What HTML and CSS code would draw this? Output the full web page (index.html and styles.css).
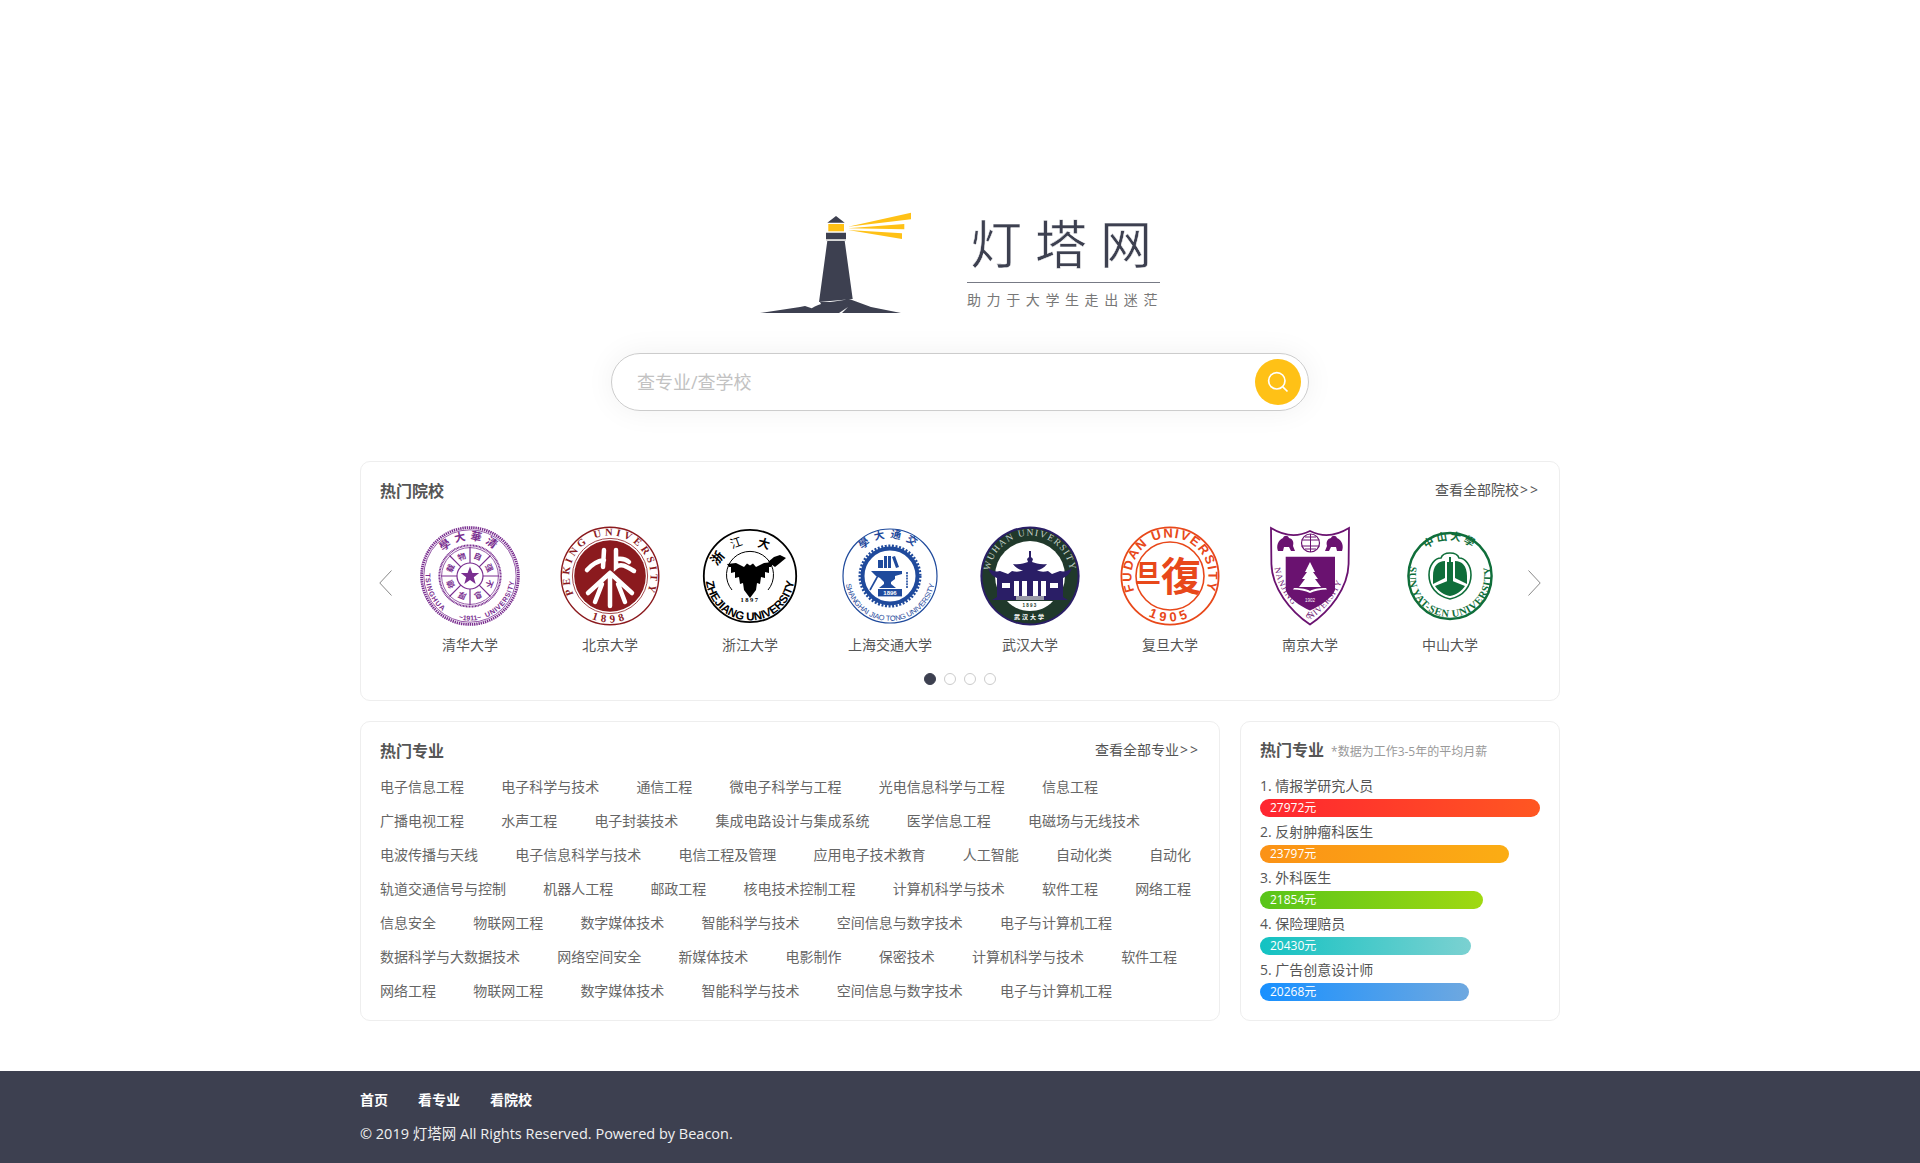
FILE: index.html
```html
<!DOCTYPE html>
<html lang="zh-CN">
<head>
  <meta charset="UTF-8" />
  <meta name="viewport" content="width=device-width, initial-scale=1.0"/>
  <title>灯塔网</title>
  <link rel="stylesheet" href="styles.css">
</head>
<body>
  <div class="logo">
    <svg class="logo-mark" viewBox="0 0 152 101">
      <path class="fill-yellow" d="M88 14.7 151 .7V7.3ZM88 16.3 144.3 12V17.3ZM88 18 142 21.3V27Z"/>
      <path class="fill-dark" d="M76 4 84.7 10.7H67.3ZM66 20.7H86V27H66ZM67.3 29H84.7L92.7 87 59 90Z"/>
      <rect class="fill-yellow" x="68.3" y="12" width="15.7" height="7.3"/>
      <rect class="fill-gray" x="66" y="27" width="20" height="1.7"/>
      <path class="fill-dark" d="M0 101 40 95 45 94 51.7 96.3C60 91 70 90 84 88L87 86.5 92 88 111 95 141 101H82L88 95 79 101Z"/>
      <path class="fill-dark" d="M60 90H92V92L80 90 62 94Z"/>
    </svg>
    <div class="brand">
      <div class="brand-name">灯塔网</div>
      <div class="brand-sub">助力于大学生走出迷茫</div>
    </div>
  </div>

  <form class="search">
    <input type="text" placeholder="查专业/查学校">
    <button type="button" class="search-btn" aria-label="搜索">
      <svg viewBox="0 0 24 24" width="24" height="24"><circle cx="10.8" cy="10.8" r="8.2"/><path d="M16.8 16.8 21.5 21.5"/></svg>
    </button>
  </form>

  <section class="card schools">
    <div class="card-head">
      <h2>热门院校</h2>
      <a class="more">查看全部院校<span>&gt;&gt;</span></a>
    </div>
    <div class="carousel">
      <svg class="arrow" viewBox="0 0 13 26"><path d="M12.5 .5 .8 13 12.5 25.5"/></svg>
      <div class="track">

        <div class="school">
          <svg class="seal" viewBox="0 0 100 100">
            <defs>
              <path id="th-top" d="M50 86A36 36 0 1 1 50 14A36 36 0 1 1 50 86"/>
              <path id="th-bot" d="M50 5.5A44.5 44.5 0 1 0 50 94.5A44.5 44.5 0 1 0 50 5.5"/>
            </defs>
            <g class="line-th">
              <circle cx="50" cy="50" r="48.4" stroke-width="2.8" stroke-dasharray="1.4 .8"/>
              <circle cx="50" cy="50" r="46.2" stroke-width=".8"/>
              <circle cx="50" cy="50" r="30.6" stroke-width="2" stroke-dasharray="1 .5"/>
              <circle cx="50" cy="50" r="28.4" stroke-width=".8"/>
              <circle cx="50" cy="50" r="13" stroke-width="1.2"/>
              <path stroke-width="1.2" d="M50 37V21M59.2 40.8 70.5 29.5M63 50H79M59.2 59.2 70.5 70.5M50 63V79M40.8 59.2 29.5 70.5M37 50H21M40.8 40.8 29.5 29.5"/>
            </g>
            <g class="txt-th cjk-b">
              <text class="t-11" text-anchor="middle"><textPath href="#th-top" startOffset="50%" letter-spacing="4">學大華清</textPath></text>
              <g class="t-8">
                <text x="50" y="32" text-anchor="middle" transform="rotate(22 50 50)">自</text>
                <text x="50" y="32" text-anchor="middle" transform="rotate(67 50 50)">强</text>
                <text x="50" y="32" text-anchor="middle" transform="rotate(112 50 50)">不</text>
                <text x="50" y="32" text-anchor="middle" transform="rotate(157 50 50)">息</text>
                <text x="50" y="32" text-anchor="middle" transform="rotate(202 50 50)">厚</text>
                <text x="50" y="32" text-anchor="middle" transform="rotate(247 50 50)">德</text>
                <text x="50" y="32" text-anchor="middle" transform="rotate(292 50 50)">载</text>
                <text x="50" y="32" text-anchor="middle" transform="rotate(337 50 50)">物</text>
              </g>
            </g>
            <g class="txt-th latin-b t-7">
              <text><textPath href="#th-bot" startOffset="24%" letter-spacing=".9">TSINGHUA</textPath></text>
              <text><textPath href="#th-bot" startOffset="56%" letter-spacing=".6">UNIVERSITY</textPath></text>
              <text text-anchor="middle"><textPath href="#th-bot" startOffset="50%">~1911~</textPath></text>
            </g>
            <polygon class="fill-th" points="50,40.5 52.4,47 59.2,47 53.8,51.2 55.7,58 50,54 44.3,58 46.2,51.2 40.8,47 47.6,47"/>
          </svg>
          <span>清华大学</span>
        </div>

        <div class="school">
          <svg class="seal" viewBox="0 0 100 100">
            <defs>
              <path id="pk-top" d="M50 90.5A40.5 40.5 0 1 1 50 9.5A40.5 40.5 0 1 1 50 90.5"/>
              <path id="pk-bot" d="M50 3.5A46.5 46.5 0 1 0 50 96.5A46.5 46.5 0 1 0 50 3.5"/>
            </defs>
            <circle class="line-pk" cx="50" cy="50" r="48.8" stroke-width="1.4"/>
            <circle class="line-pk" cx="50" cy="50" r="37.6" stroke-width=".8"/>
            <circle class="fill-pk" cx="50" cy="50" r="35.8"/>
            <text class="txt-pk serif-b t-105" text-anchor="middle"><textPath href="#pk-top" startOffset="50%" letter-spacing="3.2">PEKING UNIVERSITY</textPath></text>
            <text class="txt-pk serif-b t-11" text-anchor="middle"><textPath href="#pk-bot" startOffset="50%" letter-spacing="4">1898</textPath></text>
            <path class="mark-pk" d="M44 24 43 41M27 44C33 37 38 35 44 34M56 24 56 41C61 37 66 40 74 45M56 33C62 32 66 33 69 36M50 47 28 67M50 47 72 67M42 58 35 76M58 58 65 76M50 52V80"/>
          </svg>
          <span>北京大学</span>
        </div>

        <div class="school">
          <svg class="seal" viewBox="0 0 100 100">
            <defs>
              <path id="zj-bot" d="M50 5.5A44.5 44.5 0 1 0 50 94.5A44.5 44.5 0 1 0 50 5.5"/>
            </defs>
            <circle class="line-bk" cx="50" cy="50" r="46.2" stroke-width="1.8"/>
            <path class="line-bk" stroke-width="1" d="M32 64A23.5 23.5 0 1 1 68 64"/>
            <path class="fill-bk" d="M27 38 36 37 44 41 47 37.5 50 39.5 53 37.5 56 41 64 37 73 36 71 41 69 41 69 47 65 46 65 52 61 51 60 58 57 57 56 64 50 72 44 64 43 57 40 58 39 51 35 52 35 46 31 47 31 41 29 41Z"/>
            <path class="fill-bk" d="M68 36 74 31 80 29 86 32 80 37 75 41Z"/>
            <text class="fill-bk cjk-b t-13" x="13" y="40" transform="rotate(-50 15 36)">浙</text>
            <text class="fill-bk cjk-r t-12" x="30" y="21" transform="rotate(-20 36 16)">江</text>
            <text class="fill-bk cjk-b t-12" x="58" y="22" transform="rotate(15 64 17)">大</text>
            <text class="fill-bk latin-b t-115" text-anchor="middle" letter-spacing="-.1"><textPath href="#zj-bot" startOffset="50%">ZHEJIANG UNIVERSITY</textPath></text>
            <text class="fill-bk serif-b t-65" x="50" y="76" text-anchor="middle" letter-spacing="1.5">1897</text>
          </svg>
          <span>浙江大学</span>
        </div>

        <div class="school">
          <svg class="seal" viewBox="0 0 100 100">
            <defs>
              <path id="sj-top" d="M50 88A38 38 0 1 1 50 12A38 38 0 1 1 50 88"/>
              <path id="sj-bot" d="M50 5A45 45 0 1 0 50 95A45 45 0 1 0 50 5"/>
            </defs>
            <circle class="line-sj" cx="50" cy="50" r="47" stroke-width="1.2"/>
            <circle class="line-sj" cx="50" cy="50" r="27.5" stroke-width="4"/>
            <circle class="line-sj" cx="50" cy="50" r="30.2" stroke-width="2.6" stroke-dasharray="2 1.6"/>
            <text class="txt-sj cjk-b t-105" text-anchor="middle"><textPath href="#sj-top" startOffset="50%" letter-spacing="5">學大通交</textPath></text>
            <text class="txt-sj latin-r t-75" text-anchor="middle" letter-spacing="-.15"><textPath href="#sj-bot" startOffset="50%">SHANGHAI JIAO TONG UNIVERSITY</textPath></text>
            <path class="fill-sj" d="M38 34H43V42H38ZM44 30H47V42H44ZM48 30H51V42H48ZM52 31 55 30 59 41 56 42ZM31 45H62V48L55 50V53L51 56V58L56 62H39L44 58V56L40 52 36 50Z"/>
            <path class="line-sj" stroke-width="1.6" d="M40 46 30 64"/>
            <path class="line-sj" stroke-width="1.6" stroke-dasharray="2 .8" d="M67 46V62"/>
            <rect class="fill-sj" x="38" y="63" width="24" height="7.4"/>
            <text class="fill-white latin-b t-6" x="50" y="69" text-anchor="middle">1896</text>
          </svg>
          <span>上海交通大学</span>
        </div>

        <div class="school">
          <svg class="seal" viewBox="0 0 100 100">
            <defs>
              <path id="wh-top" d="M50 90.5A40.5 40.5 0 1 1 50 9.5A40.5 40.5 0 1 1 50 90.5"/>
              <clipPath id="wh-clip"><circle cx="50" cy="50" r="47"/></clipPath>
            </defs>
            <circle class="fill-wn" cx="50" cy="50" r="49.6"/>
            <circle class="fill-wg" cx="50" cy="50" r="47.6"/>
            <circle class="fill-white" cx="50" cy="50" r="35"/>
            <path class="fill-wg" d="M12 74H88V100H12Z" clip-path="url(#wh-clip)"/>
            <path class="fill-white" d="M27 75H73C67 82 58 85 50 85S33 82 27 75Z"/>
            <text class="txt-wh serif-r t-95" text-anchor="middle"><textPath href="#wh-top" startOffset="50%" letter-spacing="1.3">WUHAN UNIVERSITY</textPath></text>
            <path class="fill-wn" d="M49 25H51V31L53 33 52 36C56 37 60 39 67 38 64 42 60 44 57 44 60 46 64 46 68 45L72 48 80 45C84 46 88 45 92 42 90 48 86 51 83 52V71L88 74H12L17 71V52C14 51 10 48 8 42 12 45 16 46 20 45L28 48 32 45C36 46 40 46 43 44 40 44 36 42 33 38 40 39 44 37 48 36L47 33 49 31Z"/>
            <path class="fill-white" d="M34 55H39V70H34ZM42 55H47V70H42ZM53 55H58V70H53ZM61 55H66V70H61ZM22 57H30V62H22ZM70 57H78V62H70Z"/>
            <path class="fill-gray2" d="M36 70H64V74H36Z"/>
            <text class="fill-wg latin-b t-45" x="50" y="81" text-anchor="middle" letter-spacing="1.2">1893</text>
            <text class="fill-white cjk-b t-6" x="50" y="93" text-anchor="middle" letter-spacing="2">武汉大学</text>
          </svg>
          <span>武汉大学</span>
        </div>

        <div class="school">
          <svg class="seal" viewBox="0 0 100 100">
            <defs>
              <path id="fd-top" d="M50 88.5A38.5 38.5 0 1 1 50 11.5A38.5 38.5 0 1 1 50 88.5"/>
              <path id="fd-bot" d="M50 4.5A45.5 45.5 0 1 0 50 95.5A45.5 45.5 0 1 0 50 4.5"/>
            </defs>
            <circle class="line-fd" cx="50" cy="50" r="48.6" stroke-width="1.8"/>
            <circle class="line-fd" cx="50" cy="50" r="34" stroke-width="1.6"/>
            <text class="txt-fd latin-b t-13" text-anchor="middle"><textPath href="#fd-top" startOffset="50%" letter-spacing="1.5">FUDAN UNIVERSITY</textPath></text>
            <text class="txt-fd latin-b t-13" text-anchor="middle"><textPath href="#fd-bot" startOffset="50%" letter-spacing="4">1905</textPath></text>
            <text class="txt-fd cjk-b t-26" x="15" y="57">旦</text>
            <text class="txt-fd cjk-b t-40" x="41" y="65">復</text>
          </svg>
          <span>复旦大学</span>
        </div>

        <div class="school">
          <svg class="seal" viewBox="0 0 100 100">
            <defs>
              <path id="nj-edge" d="M14.5 42C18 64 33 83 50 93.5C67 83 82 64 85.5 42"/>
            </defs>
            <path class="line-nj" stroke-width="1.8" d="M11 2C24 10 38 11 50 5C62 11 76 10 89 2L88.6 38C88 62 70 85 50 98.5C30 85 12 62 11.4 38Z"/>
            <path class="fill-nj" d="M25.7 30.7H75V64C72 72 60 80 50 84.5C40 80 28 72 25.7 64Z"/>
            <path class="fill-white" d="M50 36 55 46H53L58 53H55L61 61H39L45 53H42L47 46H45ZM34 62C42 62 47 63 50 65 53 63 58 62 66 62L67 63.5C60 63.5 55 65 50 67 45 65 40 63.5 33 63.5Z"/>
            <text class="fill-white latin-r t-45" x="50" y="76" text-anchor="middle">1902</text>
            <circle class="line-nj" cx="50.5" cy="17" r="9" stroke-width="1.2"/>
            <path class="line-nj" stroke-width="1" d="M41.5 14H59.5M41.5 20H59.5M50.5 8V26M45 11H56M45 23H56"/>
            <path class="fill-nj" d="M18 25C16 20 18 14 23 12 24 9 28 9 29 12 33 13 34 16 33 20L35 25H31L29 21 24 21 23 25ZM82 25C84 20 82 14 77 12 76 9 72 9 71 12 67 13 66 16 67 20L65 25H69L71 21 76 21 77 25Z"/>
            <g class="txt-nj serif-r t-85">
              <text><textPath href="#nj-edge" startOffset="0" letter-spacing=".8">NANJING</textPath></text>
              <text><textPath href="#nj-edge" startOffset="45%" letter-spacing=".6">UNIVERSITY</textPath></text>
            </g>
          </svg>
          <span>南京大学</span>
        </div>

        <div class="school">
          <svg class="seal" viewBox="0 0 100 100">
            <defs>
              <path id="zs-top" d="M50 86A36 36 0 1 1 50 14A36 36 0 1 1 50 86"/>
              <path id="zs-bot" d="M50 9A41 41 0 1 0 50 91A41 41 0 1 0 50 9"/>
            </defs>
            <ellipse class="line-zs" cx="50" cy="50" rx="41.6" ry="43" stroke-width="2.4"/>
            <text class="txt-zs cjk-b t-105" text-anchor="middle"><textPath href="#zs-top" startOffset="50%" letter-spacing="2.4">中山大學</textPath></text>
            <text class="txt-zs serif-b t-105" text-anchor="middle" letter-spacing=".6"><textPath href="#zs-bot" startOffset="50%">SUN YAT-SEN UNIVERSITY</textPath></text>
            <path class="line-zs" stroke-width="1.6" d="M50 27C55 27 58 29 59 32 65 32 71 39 71 49 71 60 64 70 50 73 36 70 29 60 29 49 29 39 35 32 41 32 42 29 45 27 50 27Z"/>
            <path class="fill-zs" d="M33 50C33 40 38 35 45 35V52L33 58ZM67 50C67 40 62 35 55 35V52L67 58ZM35 60 50 54 65 60C62 65 56 69 50 70 44 69 38 65 35 60Z"/>
            <path class="fill-zs" d="M47 36H53V56H47ZM49 31H51V36H49Z"/>
          </svg>
          <span>中山大学</span>
        </div>
      </div>
      <svg class="arrow" viewBox="0 0 13 26"><path d="M.5 .5 12.2 13 .5 25.5"/></svg>
    </div>
    <div class="dots">
      <i class="on"></i><i></i><i></i><i></i>
    </div>
  </section>

  <div class="row">
    <section class="card majors">
      <div class="card-head">
        <h2>热门专业</h2>
        <a class="more">查看全部专业<span>&gt;&gt;</span></a>
      </div>
      <div class="major-list">
        <a>电子信息工程</a><a>电子科学与技术</a><a>通信工程</a><a>微电子科学与工程</a><a>光电信息科学与工程</a><a>信息工程</a>
        <a>广播电视工程</a><a>水声工程</a><a>电子封装技术</a><a>集成电路设计与集成系统</a><a>医学信息工程</a><a>电磁场与无线技术</a>
        <a>电波传播与天线</a><a>电子信息科学与技术</a><a>电信工程及管理</a><a>应用电子技术教育</a><a>人工智能</a><a>自动化类</a><a>自动化</a>
        <a>轨道交通信号与控制</a><a>机器人工程</a><a>邮政工程</a><a>核电技术控制工程</a><a>计算机科学与技术</a><a>软件工程</a><a>网络工程</a>
        <a>信息安全</a><a>物联网工程</a><a>数字媒体技术</a><a>智能科学与技术</a><a>空间信息与数字技术</a><a>电子与计算机工程</a>
        <a>数据科学与大数据技术</a><a>网络空间安全</a><a>新媒体技术</a><a>电影制作</a><a>保密技术</a><a>计算机科学与技术</a><a>软件工程</a>
        <a>网络工程</a><a>物联网工程</a><a>数字媒体技术</a><a>智能科学与技术</a><a>空间信息与数字技术</a><a>电子与计算机工程</a>
      </div>
    </section>

    <section class="card salary">
      <div class="card-head start">
        <h2>热门专业</h2>
        <small>*数据为工作3-5年的平均月薪</small>
      </div>
      <div class="rank">
        <div class="rank-item">
          <p>1. 情报学研究人员</p>
          <div class="bar bar-red" style="width: 280px">27972元</div>
        </div>
        <div class="rank-item">
          <p>2. 反射肿瘤科医生</p>
          <div class="bar bar-orange" style="width: 249px">23797元</div>
        </div>
        <div class="rank-item">
          <p>3. 外科医生</p>
          <div class="bar bar-green" style="width: 223px">21854元</div>
        </div>
        <div class="rank-item">
          <p>4. 保险理赔员</p>
          <div class="bar bar-teal" style="width: 211px">20430元</div>
        </div>
        <div class="rank-item">
          <p>5. 广告创意设计师</p>
          <div class="bar bar-blue" style="width: 209px">20268元</div>
        </div>
      </div>
    </section>
  </div>

  <footer>
    <div class="footer-inner">
      <nav><a>首页</a><a>看专业</a><a>看院校</a></nav>
      <p>© 2019 灯塔网 All Rights Reserved. Powered by Beacon.</p>
    </div>
  </footer>
</body>
</html>
```

FILE: styles.css
```css
body {
  margin: 0;
  background-color: #fff;
  color: #555;
  font-family: 'Open Sans', 'Noto Sans CJK SC', sans-serif;
  font-size: 14px;
}
a {
  color: inherit;
  text-decoration: none;
}
p, h2 {
  margin: 0;
  font-weight: normal;
}

/* logo */
.logo {
  display: flex;
  justify-content: space-between;
  width: 400px;
  height: 101px;
  margin: 212px auto 0;
}
.logo-mark {
  width: 152px;
  height: 101px;
}
.fill-yellow { fill: #ffc116; }
.fill-dark { fill: #3d4050; }
.fill-gray { fill: #c9c9c9; }
.brand {
  width: 193px;
  box-sizing: border-box;
  color: #3d4050;
}
.brand-name {
  height: 71px;
  border-bottom: 1.5px solid #777a85;
  font-size: 52px;
  line-height: 64px;
  letter-spacing: 13px;
  padding-left: 3px;
  white-space: nowrap;
  -webkit-text-stroke: 0.5px #fff;
  box-sizing: border-box;
}
.brand-sub {
  margin-top: 8px;
  font-size: 14px;
  line-height: 18px;
  letter-spacing: 5.6px;
  color: #777;
  white-space: nowrap;
}

/* search */
.search {
  display: flex;
  align-items: center;
  justify-content: space-between;
  box-sizing: border-box;
  width: 698px;
  height: 58px;
  margin: 40px auto 0;
  padding: 0 7px 0 25px;
  border: 1px solid #ccc;
  border-radius: 29px;
  box-shadow: 0 0 30px rgba(0, 0, 0, 0.06);
}
.search input {
  flex: 1;
  border: none;
  outline: none;
  padding: 0;
  font: 18px 'Open Sans', 'Noto Sans CJK SC', sans-serif;
}
.search input::placeholder {
  color: #c2c2c2;
}
.search-btn {
  display: flex;
  align-items: center;
  justify-content: center;
  width: 46px;
  height: 46px;
  padding: 0;
  border: none;
  border-radius: 50%;
  background-color: #ffc116;
}
.search-btn svg {
  fill: none;
  stroke: #fff;
  stroke-width: 1.7;
}

/* cards */
.card {
  box-sizing: border-box;
  padding: 13px 19px 14px;
  border: 1px solid #eee;
  border-radius: 10px;
  background-color: #fff;
}
.card-head {
  display: flex;
  justify-content: space-between;
  align-items: center;
  height: 30px;
}
.card-head.start {
  justify-content: flex-start;
  align-items: baseline;
  line-height: 30px;
}
.card-head h2 {
  font-size: 16px;
  font-weight: bold;
  color: #555;
}
.card-head small {
  margin-left: 7px;
  font-size: 12px;
  color: #999;
}
.more {
  margin-top: -2px;
  color: #555;
}
.more span {
  letter-spacing: 2px;
  margin-left: 1px;
}

.schools {
  width: 1200px;
  height: 240px;
  margin: 50px auto 0;
}
.carousel {
  display: flex;
  justify-content: space-between;
  margin: 21px -1px 0;
}
.arrow {
  width: 13px;
  height: 26px;
  margin-top: 44px;
  fill: none;
  stroke: #888;
  stroke-width: 1;
}
.track {
  display: flex;
}
.school {
  display: flex;
  flex-direction: column;
  align-items: center;
  width: 140px;
  color: #555;
  line-height: 20px;
}
.school span {
  margin-top: 9px;
}
.seal {
  display: block;
  width: 100px;
  height: 100px;
}
.dots {
  display: flex;
  justify-content: center;
  gap: 8px;
  margin-top: 18px;
}
.dots i {
  box-sizing: border-box;
  width: 12px;
  height: 12px;
  border: 1px solid #ccc;
  border-radius: 50%;
}
.dots i.on {
  border-color: #3d4050;
  background-color: #3d4050;
}

/* seal drawing */
.cjk-b { font-family: 'Noto Sans CJK SC', sans-serif; font-weight: bold; }
.cjk-r { font-family: 'Noto Sans CJK SC', sans-serif; }
.latin-b { font-family: 'Liberation Sans', sans-serif; font-weight: bold; }
.latin-r { font-family: 'Liberation Sans', sans-serif; }
.serif-b { font-family: 'Liberation Serif', serif; font-weight: bold; }
.serif-r { font-family: 'Liberation Serif', serif; }
.t-45 { font-size: 4.5px; }
.t-6 { font-size: 6px; }
.t-65 { font-size: 6.5px; }
.t-7 { font-size: 7px; }
.t-75 { font-size: 7.5px; }
.t-8 { font-size: 8px; }
.t-85 { font-size: 8.5px; }
.t-95 { font-size: 9.5px; }
.t-105 { font-size: 10.5px; }
.t-11 { font-size: 11px; }
.t-115 { font-size: 11.5px; }
.t-12 { font-size: 12px; }
.t-13 { font-size: 13px; }
.t-26 { font-size: 26px; }
.t-40 { font-size: 40px; }
.fill-white { fill: #fff; }
.fill-gray2 { fill: #9a9aa8; }
.line-th { fill: none; stroke: #7a2f90; }
.txt-th, .fill-th { fill: #7a2f90; }
.line-pk { fill: none; stroke: #8b1a1e; }
.fill-pk, .txt-pk { fill: #8b1a1e; }
.mark-pk { fill: none; stroke: #fff; stroke-width: 4.5; stroke-linecap: round; }
.line-bk { fill: none; stroke: #000; }
.fill-bk { fill: #000; }
.line-sj { fill: none; stroke: #1f4a9c; }
.txt-sj, .fill-sj { fill: #1f4a9c; }
.fill-wn { fill: #2a1e66; }
.fill-wg { fill: #20392b; }
.txt-wh { fill: #c8d4cc; }
.line-fd { fill: none; stroke: #e8481a; }
.txt-fd { fill: #e8481a; }
.line-nj { fill: none; stroke: #6a1270; }
.fill-nj, .txt-nj { fill: #6a1270; }
.line-zs { fill: none; stroke: #0f6e3a; }
.txt-zs, .fill-zs { fill: #0f6e3a; }

/* bottom row */
.row {
  display: flex;
  gap: 20px;
  width: 1200px;
  margin: 20px auto 0;
}
.majors {
  width: 860px;
  height: 300px;
}
.major-list {
  display: flex;
  flex-wrap: wrap;
  column-gap: 37.2px;
  margin-top: 5px;
  line-height: 34px;
  color: #666;
}
.salary {
  width: 320px;
  height: 300px;
}
.rank {
  display: flex;
  flex-direction: column;
  gap: 5px;
  margin-top: 11px;
}
.rank-item p {
  line-height: 20px;
  color: #555;
}
.bar {
  box-sizing: border-box;
  height: 18px;
  margin-top: 3px;
  padding-left: 10px;
  border-radius: 9px;
  color: #fff;
  font-size: 12px;
  line-height: 18px;
}
.bar-red { background: linear-gradient(to right, #ff2530, #ff5722); }
.bar-orange { background: linear-gradient(to right, #fb9216, #fbad14); }
.bar-green { background: linear-gradient(to right, #58c41a, #a0d911); }
.bar-teal { background: linear-gradient(to right, #13c2c2, #7bd1d1); }
.bar-blue { background: linear-gradient(to right, #1890ff, #6ea8e0); }

/* footer */
footer {
  height: 92px;
  margin-top: 50px;
  background-color: #3d4050;
  color: #f0f0f0;
}
.footer-inner {
  width: 1200px;
  margin: 0 auto;
  padding-top: 19px;
  line-height: 20px;
}
footer nav {
  display: flex;
  gap: 30px;
  color: #fff;
  font-weight: bold;
}
footer p {
  margin-top: 14px;
  font-size: 14.5px;
}
```
